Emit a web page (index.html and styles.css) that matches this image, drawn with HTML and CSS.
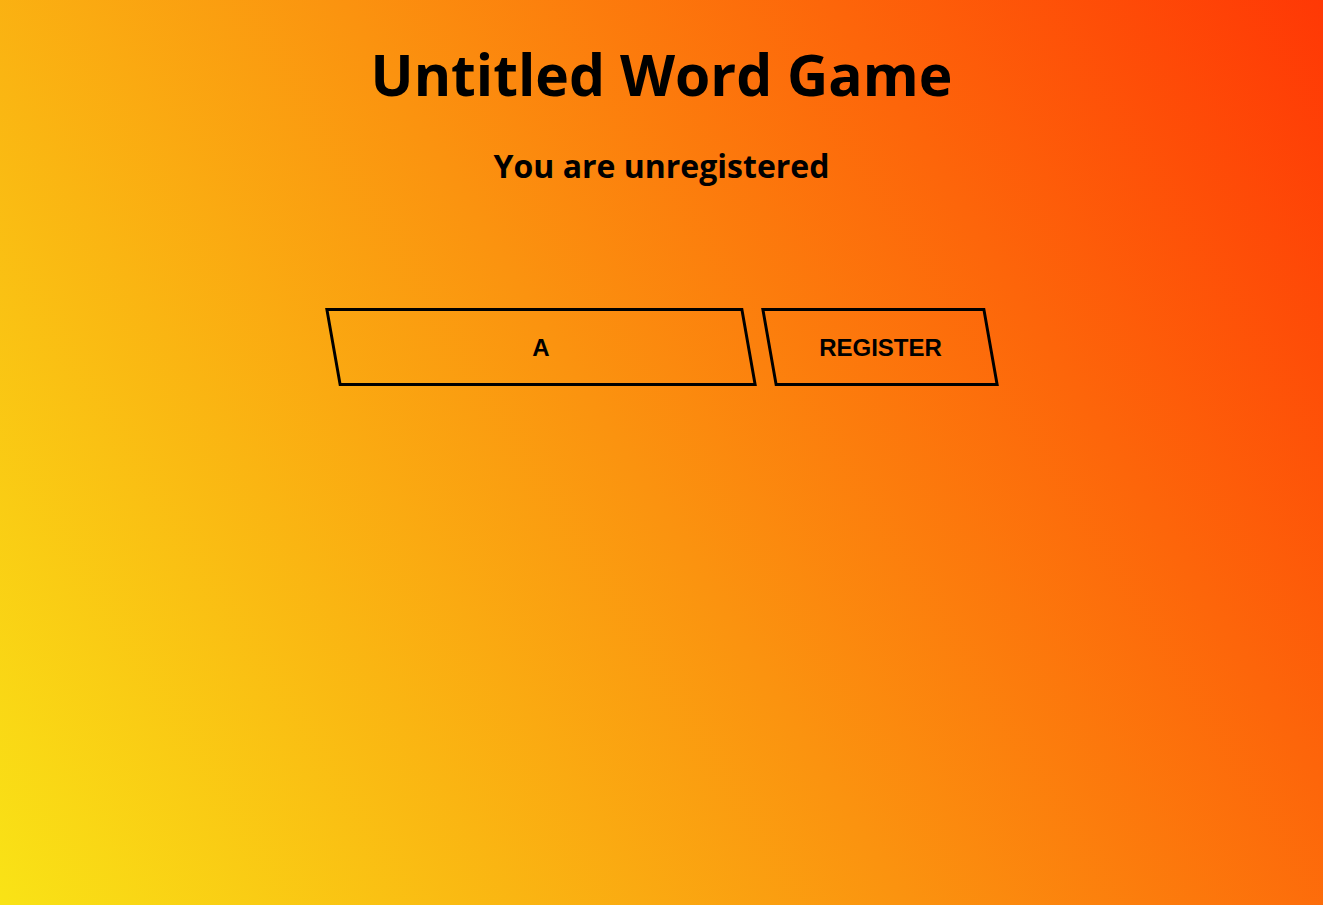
FILE: index.html
```html
<!DOCTYPE html>
<html lang="en">
<head>
<meta charset="utf-8">
<title>Untitled Word Game</title>
<link rel="stylesheet" href="styles.css">
</head>
<body>
<main class="page">
  <h1 class="title">Untitled Word Game</h1>
  <h2 class="status">You are unregistered</h2>
  <div class="register-row">
    <div class="name-field"><span class="skew-content">A</span></div>
    <button class="register-btn"><span class="skew-content">REGISTER</span></button>
  </div>
</main>
</body>
</html>
```
FILE: styles.css
```css
html, body {
  margin: 0;
  padding: 0;
  height: 100%;
}
body {
  background: linear-gradient(58deg, #f9e316 0%, #fb930f 48%, #ff3805 100%);
  font-family: "Open Sans", "Noto Sans", sans-serif;
  color: #000;
}
.page {
  display: flex;
  flex-direction: column;
  align-items: center;
  min-height: 100%;
}
.title {
  margin: 32px 0 0;
  font-size: 57px;
  font-weight: 700;
  line-height: 84px;
}
.status {
  margin: 28px 0 0;
  font-size: 32px;
  font-weight: 700;
  line-height: 44px;
}
.register-row {
  display: flex;
  gap: 18px;
  margin-top: 120px;
}
.name-field, .register-btn {
  box-sizing: border-box;
  height: 78px;
  border: 3px solid #000;
  background: transparent;
  transform: skewX(10deg);
  display: flex;
  align-items: center;
  justify-content: center;
  font-family: "Liberation Sans", Arial, sans-serif;
  font-weight: 700;
  font-size: 24px;
  color: #000;
  padding: 2px 0 0;
}
.name-field {
  width: 418px;
}
.register-btn {
  width: 224px;
}
.skew-content {
  display: inline-block;
  transform: skewX(-10deg);
}
```
